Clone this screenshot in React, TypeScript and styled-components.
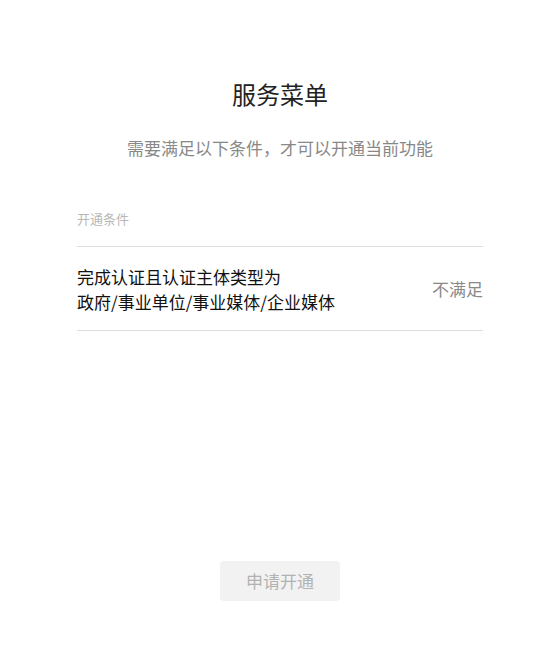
import React from "react";
import styled, { createGlobalStyle } from "styled-components";

const Global = createGlobalStyle`
  html, body { margin: 0; padding: 0; background: #fff; }
  body { font-family: "Noto Sans CJK SC", "Noto Sans", sans-serif; }
`;

const Page = styled.div`
  width: 546px;
  height: 658px;
  box-sizing: border-box;
  padding: 77px 63px 0 77px;
  display: flex;
  flex-direction: column;
`;

const Title = styled.h1`
  margin: 0;
  font-size: 24px;
  line-height: 34px;
  font-weight: 400;
  color: #222;
  text-align: center;
`;

const Subtitle = styled.p`
  margin: 24px 0 0;
  font-size: 17px;
  line-height: 26px;
  color: #888;
  text-align: center;
`;

const Label = styled.div`
  margin-top: 48px;
  font-size: 13px;
  line-height: 20px;
  color: #b8b8b8;
  padding-bottom: 17px;
  border-bottom: 1px solid #dedede;
`;

const Row = styled.div`
  display: flex;
  align-items: center;
  justify-content: space-between;
  height: 83px;
  border-bottom: 1px solid #dedede;
`;

const Condition = styled.div`
  font-size: 17px;
  line-height: 25px;
  color: #111;
`;

const Status = styled.div`
  font-size: 17px;
  line-height: 25px;
  color: #888;
`;

const Footer = styled.div`
  margin-top: 230px;
  display: flex;
  justify-content: center;
`;

const Button = styled.button`
  width: 120px;
  height: 40px;
  padding: 0 0 2px;
  border: none;
  border-radius: 4px;
  background: #f2f2f2;
  color: #b2b2b2;
  font-family: inherit;
  font-size: 17px;
  cursor: not-allowed;
`;

export default function App() {
  return (
    <>
      <Global />
      <Page>
        <Title>服务菜单</Title>
        <Subtitle>需要满足以下条件，才可以开通当前功能</Subtitle>
        <Label>开通条件</Label>
        <Row>
          <Condition>
            完成认证且认证主体类型为
            <br />
            政府/事业单位/事业媒体/企业媒体
          </Condition>
          <Status>不满足</Status>
        </Row>
        <Footer>
          <Button disabled>申请开通</Button>
        </Footer>
      </Page>
    </>
  );
}
